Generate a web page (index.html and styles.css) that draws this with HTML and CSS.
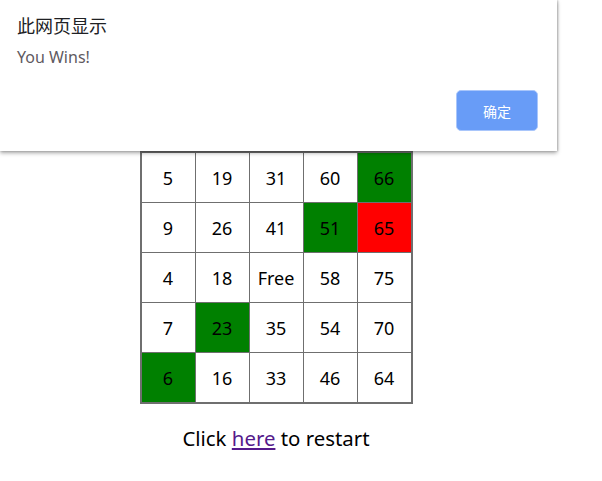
FILE: index.html
```html
<!DOCTYPE html>
<html lang="zh">
<head>
<meta charset="utf-8">
<title>Bingo</title>
<link rel="stylesheet" href="styles.css">
</head>
<body>
<main class="page">
  <table class="board">
    <tr><td>5</td><td>19</td><td>31</td><td>60</td><td class="hit">66</td></tr>
    <tr><td>9</td><td>26</td><td>41</td><td class="hit">51</td><td class="last">65</td></tr>
    <tr><td>4</td><td>18</td><td>Free</td><td>58</td><td>75</td></tr>
    <tr><td>7</td><td class="hit">23</td><td>35</td><td>54</td><td>70</td></tr>
    <tr><td class="hit">6</td><td>16</td><td>33</td><td>46</td><td>64</td></tr>
  </table>
  <p class="restart">Click <a href="#">here</a> to restart</p>
</main>
<div class="dialog">
  <div class="dialog-title">此网页显示</div>
  <div class="dialog-msg">You Wins!</div>
  <div class="dialog-actions"><button class="ok">确定</button></div>
</div>
</body>
</html>
```
FILE: styles.css
```css
html, body {
  margin: 0;
  padding: 0;
  background: #fff;
}
body {
  font-family: "Noto Sans", "Noto Sans CJK SC", sans-serif;
  color: #000;
}
.page {
  width: 536px;
  padding: 0 8px;
  text-align: center;
}
.board {
  border-collapse: collapse;
  margin: 151px auto 0;
  border: 2px solid #6f6f6f;
}
.board td {
  border: 1px solid #6f6f6f;
  width: 53px;
  height: 49px;
  padding: 0;
  font-size: 18px;
  text-align: center;
  vertical-align: middle;
}
.board td.hit { background: #008000; }
.board td.last { background: #ff0000; }
.restart {
  margin: 20px 0 0;
  font-size: 20.4px;
}
.restart a { color: #551a8b; }
.dialog {
  position: absolute;
  top: 0;
  left: 0;
  width: 557px;
  height: 151px;
  background: #fff;
  box-shadow: 0 2px 4px rgba(0,0,0,0.35), 1px 0 2px rgba(0,0,0,0.2);
  font-family: "Noto Sans CJK SC", "Noto Sans", sans-serif;
  box-sizing: border-box;
  padding: 12px 19px 0 17px;
}
.dialog-title {
  font-size: 18px;
  line-height: 26px;
  color: #202124;
}
.dialog-msg {
  margin-top: 8px;
  font-family: "Noto Sans", sans-serif;
  font-size: 16px;
  line-height: 22px;
  color: #5f5a5f;
}
.dialog-actions {
  display: flex;
  justify-content: flex-end;
  margin-top: 22px;
}
.ok {
  width: 82px;
  height: 41px;
  border: 1px solid #a9c6fb;
  border-radius: 5px;
  background: #689cf7;
  color: #fff;
  font-family: "Noto Sans CJK SC", sans-serif;
  font-size: 14px;
  padding: 0;
}
```
